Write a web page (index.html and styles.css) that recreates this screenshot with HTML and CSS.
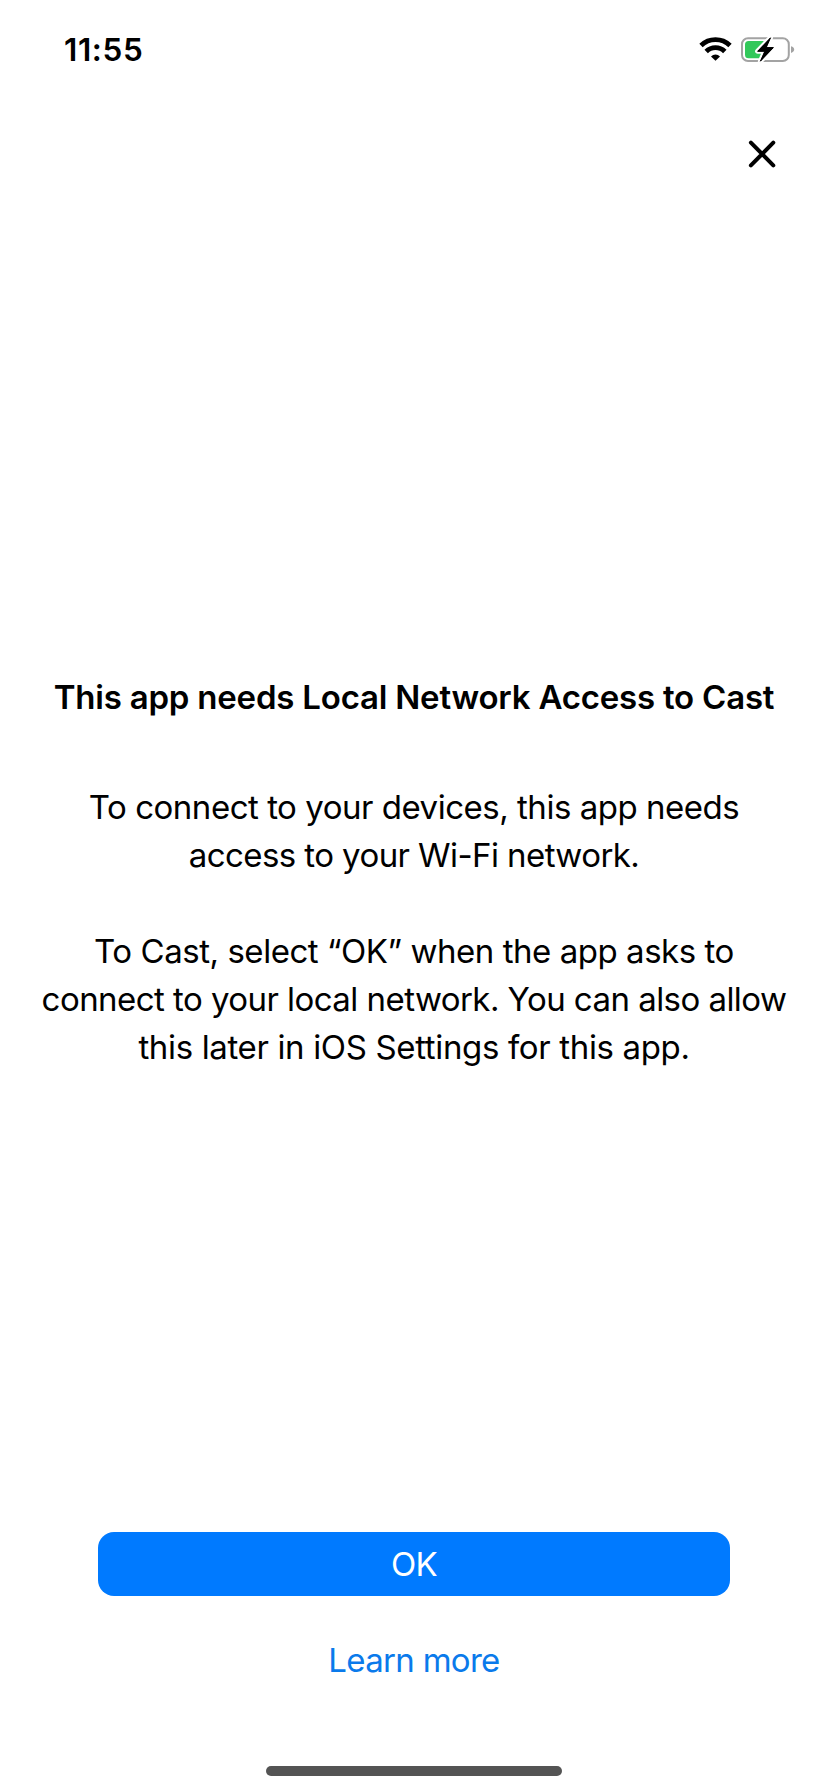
FILE: index.html
```html
<!DOCTYPE html>
<html lang="en">
<head>
<meta charset="utf-8">
<title>Local Network Access</title>
<link rel="stylesheet" href="styles.css">
</head>
<body>
<div class="screen">
  <header class="status">
    <span class="time">11:55</span>
    <div class="status-icons">
      <svg class="wifi" width="34" height="26" viewBox="699 36 34 26">
        <g fill="none" stroke="#000" stroke-width="4.8">
          <path d="M701 45.4A21 21 0 0 1 730 45.4"/>
          <path d="M706.2 51.5A13 13 0 0 1 724.8 51.5"/>
        </g>
        <path d="M715.5 60.8L711 56.4A6.3 6.3 0 0 1 720 56.4Z"/>
      </svg>
      <svg class="battery" width="56" height="28" viewBox="740 36 56 28">
        <rect x="742" y="38.2" width="46.8" height="22.8" rx="6" fill="#fff" stroke="#a3a3a3" stroke-width="2"/>
        <path d="M748.5 41H765V58.2H748.5Q745 58.2 745 54.7V44.5Q745 41 748.5 41Z" fill="#32c85a"/>
        <path d="M791 46.2Q794.2 47.2 794.2 49.6Q794.2 52 791 53Z" fill="#a3a3a3"/>
        <path d="M770.5 37.8L757.6 51.3H764.8L760.4 61.2L773.4 47.6H766.2Z" fill="#000" stroke="#fff" stroke-width="5" stroke-linejoin="round" paint-order="stroke"/>
        <path d="M770.5 37.8L757.6 51.3H764.8L760.4 61.2L773.4 47.6H766.2Z" stroke="#000" stroke-width="1" stroke-linejoin="round"/>
      </svg>
    </div>
  </header>
  <div class="toolbar">
    <svg class="close" width="32" height="32" viewBox="0 0 32 32" role="img" aria-label="Close"><path d="M4.9 4.6L27.3 27.4M27.3 4.6L4.9 27.4" stroke="#000" stroke-width="4" stroke-linecap="round"/></svg>
  </div>
  <main class="message">
    <h1 class="title">This app needs Local Network Access to Cast</h1>
    <p class="para"><span class="line l1">To connect to your devices, this app needs</span><span class="line l2">access to your Wi-Fi network.</span></p>
    <p class="para"><span class="line l3">To Cast, select “OK” when the app asks to</span><span class="line l4">connect to your local network. You can also allow</span><span class="line l5">this later in iOS Settings for this app.</span></p>
  </main>
  <footer class="actions">
    <div class="ok">OK</div>
    <div class="learn">Learn more</div>
    <div class="home"></div>
  </footer>
</div>
</body>
</html>
```
FILE: styles.css
```css
* { box-sizing: border-box; }
body { margin: 0; background: #fff; color: #000; font-family: Inter, "Liberation Sans", sans-serif; }
.screen { width: 828px; height: 1792px; display: flex; flex-direction: column; overflow: hidden; }
.status { height: 100px; flex: none; display: flex; justify-content: space-between; padding: 0 32px 0 64px; }
.time { font-size: 31.5px; font-weight: 600; line-height: 40px; padding-top: 30px; letter-spacing: 0.6px; }
.status-icons { display: flex; gap: 7px; padding-top: 36px; }
.wifi, .battery, .close { display: block; }
.toolbar { height: 573px; flex: none; display: flex; justify-content: flex-end; padding: 38px 50px 0 0; }
.message { height: 859px; flex: none; text-align: center; font-size: 33px; line-height: 48px; white-space: nowrap; }
.title { margin: 0 0 62px; font-size: 33px; line-height: 48px; font-weight: 600; letter-spacing: -0.21px; }
.para { margin: 0 0 48px; }
.line { display: block; }
.l1 { letter-spacing: -0.48px; }
.l2 { letter-spacing: -0.58px; }
.l3 { letter-spacing: -0.46px; }
.l4 { letter-spacing: -0.55px; }
.l5 { letter-spacing: -0.35px; }
.actions { display: flex; flex-direction: column; align-items: center; }
.ok { width: 632px; height: 64px; border-radius: 16px; background: #007aff; color: #fff; text-align: center; font-size: 33px; line-height: 64px; letter-spacing: -0.6px; }
.learn { margin-top: 40px; font-size: 33px; line-height: 48px; color: #0a7aeb; letter-spacing: -0.7px; }
.home { width: 296px; height: 10px; margin-top: 82px; border-radius: 5px; background: #545454; }
```
